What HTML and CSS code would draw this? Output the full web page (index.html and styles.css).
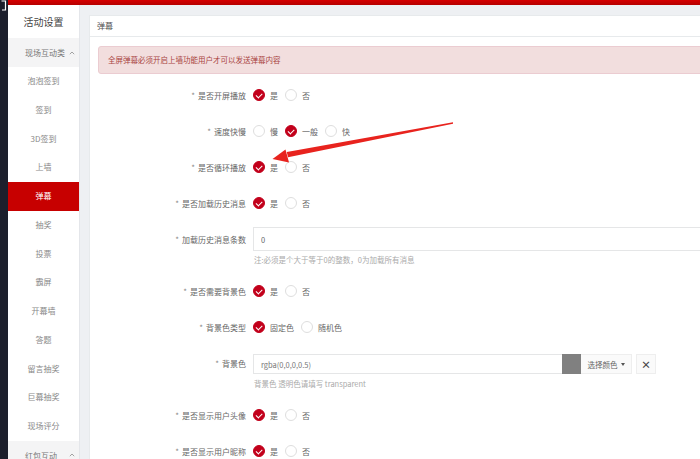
FILE: index.html
```html
<!doctype html>
<html lang="zh-CN">
<head>
    <meta charset="UTF-8">
    <title>活动设置 - 弹幕</title>
    <link rel="stylesheet" href="styles.css">
</head>
<body>
<div class="app">
    <div class="rail">
        <svg class="rail-mark" width="8" height="12" viewBox="0 0 8 12"><path d="M1.5 1 H5.5 V10 H2" fill="none" stroke="#fff" stroke-width="1.2"/></svg>
    </div>
    <div class="frame">
        <div class="topbar"></div>
        <div class="layout">
            <aside class="sidebar">
                <div class="side-title">活动设置</div>
                <div class="side-group">
                    <span>现场互动类</span>
                    <svg class="chev" width="6" height="4" viewBox="0 0 6 4"><path d="M0.8 3.2 L3 1 L5.2 3.2" fill="none" stroke="#999" stroke-width="0.9"/></svg>
                </div>
                <ul class="side-list">
                    <li>泡泡签到</li>
                    <li>签到</li>
                    <li>3D签到</li>
                    <li>上墙</li>
                    <li class="active">弹幕</li>
                    <li>抽奖</li>
                    <li>投票</li>
                    <li>霸屏</li>
                    <li>开幕墙</li>
                    <li>答题</li>
                    <li>留言抽奖</li>
                    <li>巨幕抽奖</li>
                    <li>现场评分</li>
                </ul>
                <div class="side-group">
                    <span>红包互动</span>
                    <svg class="chev" width="6" height="4" viewBox="0 0 6 4"><path d="M0.8 3.2 L3 1 L5.2 3.2" fill="none" stroke="#999" stroke-width="0.9"/></svg>
                </div>
            </aside>
            <main class="content">
                <section class="panel">
                    <div class="panel-head">弹幕</div>
                    <div class="panel-body">
                        <div class="alert">全屏弹幕必须开启上墙功能用户才可以发送弹幕内容</div>

                        <div class="form-row">
                            <label class="form-label"><span class="req">*</span>是否开屏播放</label>
                            <span class="radio"><i class="dot on"></i>是</span>
                            <span class="radio"><i class="dot"></i>否</span>
                        </div>
                        <div class="form-row">
                            <label class="form-label"><span class="req">*</span>速度快慢</label>
                            <span class="radio"><i class="dot"></i>慢</span>
                            <span class="radio"><i class="dot on"></i>一般</span>
                            <span class="radio"><i class="dot"></i>快</span>
                        </div>
                        <div class="form-row">
                            <label class="form-label"><span class="req">*</span>是否循环播放</label>
                            <span class="radio"><i class="dot on"></i>是</span>
                            <span class="radio"><i class="dot"></i>否</span>
                        </div>
                        <div class="form-row">
                            <label class="form-label"><span class="req">*</span>是否加载历史消息</label>
                            <span class="radio"><i class="dot on"></i>是</span>
                            <span class="radio"><i class="dot"></i>否</span>
                        </div>
                        <div class="form-row row-input">
                            <label class="form-label" for="historyNum"><span class="req">*</span>加载历史消息条数</label>
                            <input type="text" id="historyNum" class="text-input" value="0">
                        </div>
                        <div class="help">注:必须是个大于等于0的整数，0为加载所有消息</div>

                        <div class="form-row">
                            <label class="form-label"><span class="req">*</span>是否需要背景色</label>
                            <span class="radio"><i class="dot on"></i>是</span>
                            <span class="radio"><i class="dot"></i>否</span>
                        </div>
                        <div class="form-row">
                            <label class="form-label"><span class="req">*</span>背景色类型</label>
                            <span class="radio"><i class="dot on"></i>固定色</span>
                            <span class="radio"><i class="dot"></i>随机色</span>
                        </div>
                        <div class="form-row">
                            <label class="form-label" for="bgColor"><span class="req">*</span>背景色</label>
                            <div class="color-group">
                                <input type="text" id="bgColor" class="color-input" value="rgba(0,0,0,0.5)">
                                <span class="swatch"></span>
                                <span class="pick-btn">选择颜色 <b class="caret"></b></span>
                                <span class="clear-btn">×</span>
                            </div>
                        </div>
                        <div class="help">背景色 透明色请填写 transparent</div>

                        <div class="form-row">
                            <label class="form-label"><span class="req">*</span>是否显示用户头像</label>
                            <span class="radio"><i class="dot on"></i>是</span>
                            <span class="radio"><i class="dot"></i>否</span>
                        </div>
                        <div class="form-row">
                            <label class="form-label"><span class="req">*</span>是否显示用户昵称</label>
                            <span class="radio"><i class="dot on"></i>是</span>
                            <span class="radio"><i class="dot"></i>否</span>
                        </div>
                    </div>
                </section>
            </main>
        </div>
    </div>
    <!-- 标注箭头 -->
    <svg class="arrow" width="700" height="459" viewBox="0 0 700 459">
        <polygon points="453,122.3 453,123.7 288,157.2 286.8,152" fill="#e8231e"/>
        <polygon points="272.5,159 285.5,149.5 289,162.5" fill="#e8231e"/>
    </svg>
</div>
</body>
</html>
```

FILE: styles.css
```css
/*reset*/
body, ul, li, p { margin: 0; padding: 0; }
ul { list-style: none; }
body {
    overflow: hidden;
    background: #eef0f3;
    font-family: "Noto Sans CJK SC", "Noto Sans", sans-serif;
    color: #666;
}
input { font-family: inherit; outline: none; }
/*/reset*/

.app {
    position: relative;
    display: flex;
    width: 700px;
    height: 459px;
    overflow: hidden;
}
.rail {
    width: 8px;
    flex: none;
    background: #1c1f2c;
}
.rail-mark { display: block; }
.frame {
    flex: 1;
    min-width: 0;
    display: flex;
    flex-direction: column;
}
.topbar {
    height: 5px;
    flex: none;
    background: linear-gradient(#d60000, #b50000);
}
.layout {
    flex: 1;
    display: flex;
    min-height: 0;
}

/* 左侧菜单 */
.sidebar {
    width: 71px;
    flex: none;
    background: #fff;
    border-right: 1px solid #e4e6ea;
}
.side-title {
    height: 33px;
    line-height: 33px;
    text-align: center;
    font-size: 10px;
    color: #444;
}
.side-group {
    height: 29px;
    display: flex;
    align-items: center;
    padding-left: 17px;
    padding-right: 4px;
    background: #f4f4f5;
    font-size: 8px;
    color: #777;
}
.side-group .chev { margin-left: auto; }
.side-list li {
    height: 28.75px;
    line-height: 28.75px;
    text-align: center;
    font-size: 8px;
    color: #888;
}
.side-list li.active {
    background: #c70000;
    color: #fff;
}

/* 右侧内容 */
.content {
    flex: 1;
    min-width: 0;
    padding: 10px 0 0 9px;
}
.panel {
    width: 700px;
    height: 100%;
    background: #fff;
    border: 1px solid #e7eaec;
    border-bottom: none;
    box-sizing: border-box;
}
.panel-head {
    height: 20px;
    line-height: 20px;
    padding: 0 7px;
    font-size: 8px;
    color: #555;
    border-bottom: 1px solid #e7eaec;
}
.panel-body {
    padding: 9px 8px 0;
}
.alert {
    height: 28px;
    line-height: 26px;
    padding: 0 9px;
    box-sizing: border-box;
    margin-bottom: 9px;
    background: #f2dede;
    border: 1px solid #ebccd1;
    border-radius: 3px;
    color: #a94442;
    font-size: 7.5px;
}

.form-row {
    display: flex;
    align-items: center;
    height: 24px;
    margin-bottom: 12px;
}
.row-input { margin-top: 2px; }
.form-label {
    width: 148px;
    margin-right: 7px;
    flex: none;
    text-align: right;
    font-size: 8px;
    color: #666;
}
.req {
    color: #888;
    margin-right: 3px;
}
.radio {
    display: flex;
    align-items: center;
    margin-right: 7px;
    font-size: 8px;
    color: #666;
}
.dot {
    position: relative;
    width: 12px;
    height: 12px;
    margin-right: 5px;
    border: 1px solid #dedede;
    border-radius: 50%;
    box-sizing: border-box;
    background: #fff;
}
.dot.on {
    background: #c2001b;
    border-color: #c2001b;
}
.dot.on:after {
    content: "";
    position: absolute;
    left: 3px;
    top: 2.2px;
    width: 3.2px;
    height: 5.2px;
    border: solid #fff;
    border-width: 0 1.6px 1.6px 0;
    transform: rotate(45deg);
}
.text-input {
    flex: 1;
    height: 24px;
    padding: 0 7px;
    border: 1px solid #e5e6e7;
    box-sizing: border-box;
    font-size: 7.5px;
    color: #666;
}
.help {
    margin: -9px 0 13px 156px;
    line-height: 12px;
    font-size: 7.5px;
    color: #aaa;
}

.color-group {
    display: flex;
    align-items: stretch;
    height: 20px;
    margin-top: 2px;
}
.color-input {
    width: 309px;
    height: 20px;
    padding: 0 7px;
    border: 1px solid #e5e6e7;
    border-right: none;
    box-sizing: border-box;
    font-size: 7.5px;
    color: #777;
}
.swatch {
    width: 19px;
    background: #808080;
}
.pick-btn {
    width: 51px;
    display: flex;
    align-items: center;
    justify-content: center;
    background: #fafafa;
    border: 1px solid #eeeeee;
    border-left: none;
    box-sizing: border-box;
    font-size: 7.5px;
    color: #666;
}
.caret {
    display: inline-block;
    margin-left: 3px;
    border-top: 3px solid #555;
    border-left: 2.5px solid transparent;
    border-right: 2.5px solid transparent;
}
.clear-btn {
    width: 20px;
    margin-left: 4px;
    display: flex;
    align-items: center;
    justify-content: center;
    background: #fafafa;
    border: 1px solid #eeeeee;
    box-sizing: border-box;
    font-size: 10px;
    font-weight: bold;
    color: #444;
}

.arrow {
    position: absolute;
    left: 0;
    top: 0;
    pointer-events: none;
}
```
